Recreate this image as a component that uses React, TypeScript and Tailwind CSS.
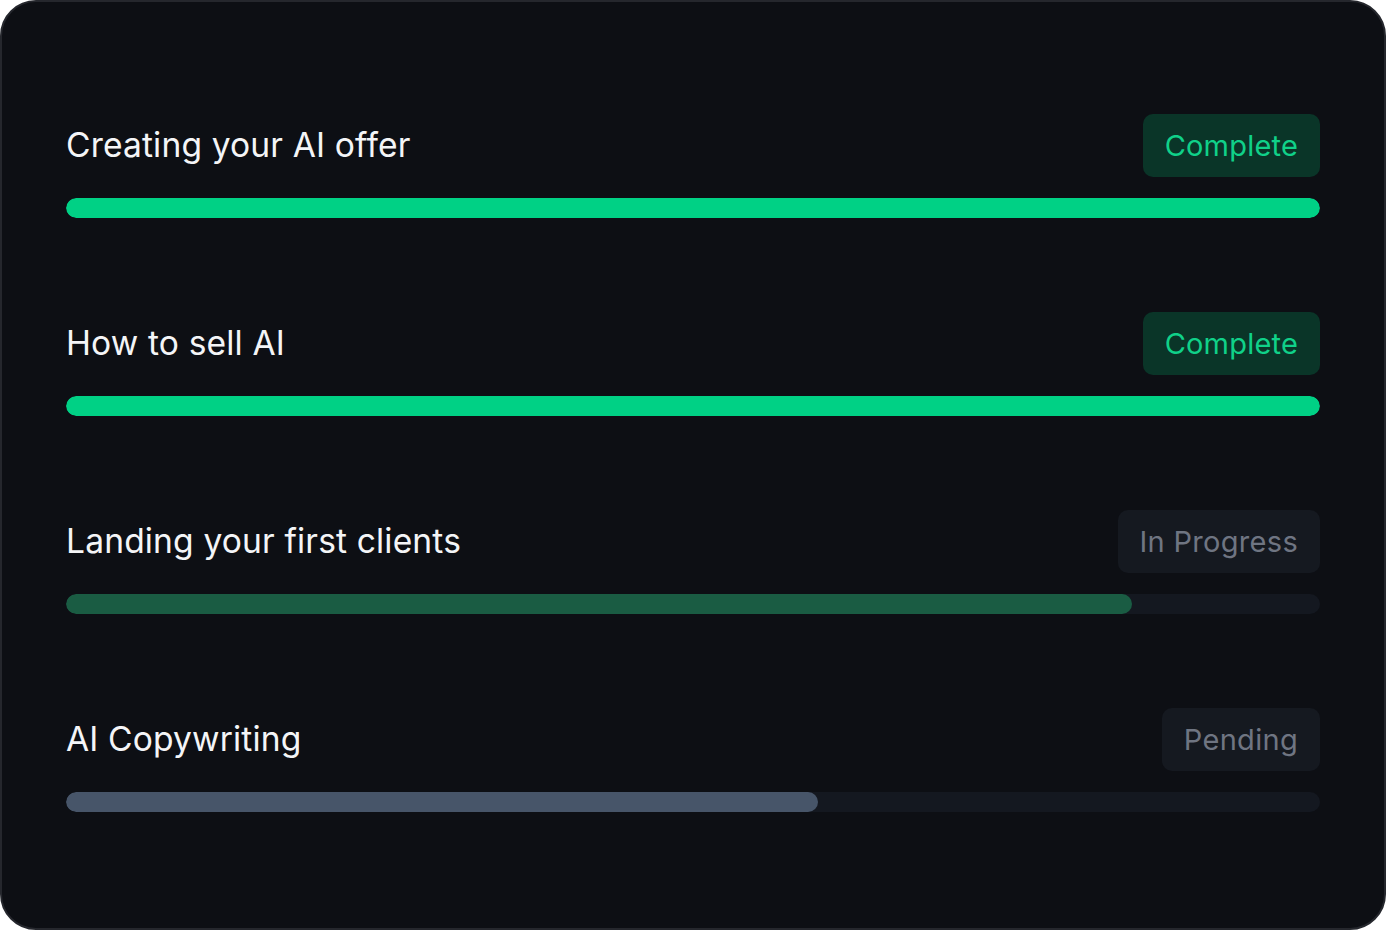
import React from "react";

type Module = {
  title: string;
  status: "complete" | "progress" | "pending";
  progress: number;
};

const modules: Module[] = [
  { title: "Creating your AI offer", status: "complete", progress: 100 },
  { title: "How to sell AI", status: "complete", progress: 100 },
  { title: "Landing your first clients", status: "progress", progress: 85 },
  { title: "AI Copywriting", status: "pending", progress: 60 },
];

function StatusBadge({ status }: { status: Module["status"] }) {
  if (status === "complete") {
    return (
      <div className="flex h-[63px] items-center rounded-[10px] bg-[#0a3528] px-[22px] text-[29px] tracking-[0.2px] text-[#10d189]">
        Complete
      </div>
    );
  }
  return (
    <div className="flex h-[63px] items-center rounded-[10px] bg-[#151920] px-[22px] text-[29px] tracking-[0.3px] text-[#6f7582]">
      {status === "progress" ? "In Progress" : "Pending"}
    </div>
  );
}

function barColor(status: Module["status"]) {
  if (status === "complete") return "bg-[#00d185]";
  if (status === "progress") return "bg-[#1a5c43]";
  return "bg-[#475569]";
}

export default function App() {
  return (
    <div className="h-[930px] w-[1386px] bg-white" style={{ fontFamily: "Inter, 'Noto Sans', sans-serif" }}>
      <div className="flex h-full w-full flex-col gap-[94px] rounded-[36px] border-2 border-[#25272d] bg-[#0d0f14] px-[64px] pt-[112px]">
        {modules.map((m) => (
          <div key={m.title} className="flex flex-col gap-[21px]">
            <div className="flex items-center justify-between">
              <h2 className="text-[33.6px] font-normal tracking-[0.15px] text-[#f4f5f7]">{m.title}</h2>
              <StatusBadge status={m.status} />
            </div>
            <div className="h-[20px] w-full overflow-hidden rounded-full bg-[#141820]">
              <div className={`h-full rounded-full ${barColor(m.status)}`} style={{ width: `${m.progress}%` }} />
            </div>
          </div>
        ))}
      </div>
    </div>
  );
}
